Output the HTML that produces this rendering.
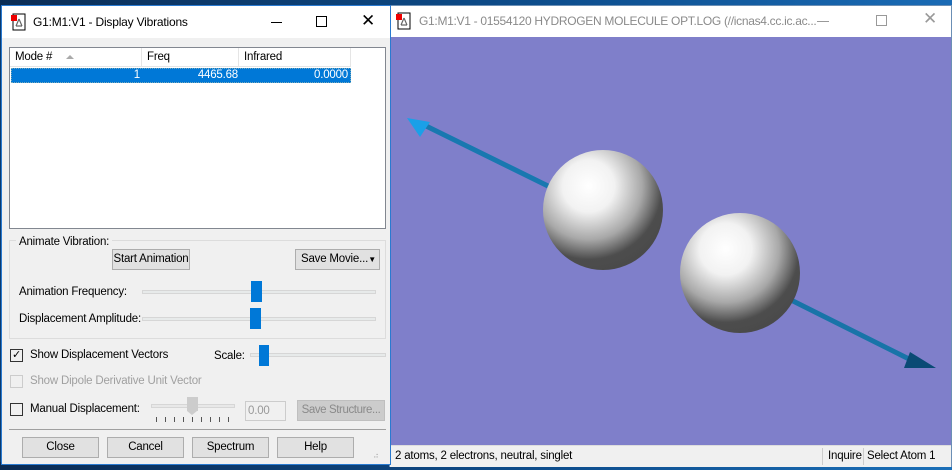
<!DOCTYPE html>
<html><head><style>
*{margin:0;padding:0;box-sizing:border-box}
body{width:952px;height:470px;overflow:hidden;background:#0a3a6e;position:relative;font-family:"Liberation Sans",sans-serif;font-size:11.5px;letter-spacing:-0.2px;color:#000}
.abs{position:absolute;white-space:nowrap}
.btn{position:absolute;white-space:nowrap;background:#e1e1e1;border:1px solid #adadad;text-align:center;line-height:19px;font-size:11.5px}
.track{position:absolute;height:4px;background:#e7eaea;border:1px solid #d6d6d6}
.thumb{position:absolute;width:11px;height:21px;background:#0078d7}
</style></head><body>
<div class="abs" style="left:0;top:0;width:952px;height:6px;background:linear-gradient(90deg,#0b2d55,#0d4f8f 60%,#1a6bb5)"></div>
<div class="abs" style="left:0;top:462px;width:952px;height:8px;background:linear-gradient(90deg,#0a2a52,#0e4e8e 60%,#1b6fb8)"></div>

<!-- right window -->
<div class="abs" style="left:389px;top:5px;width:563px;height:462px;background:#fff;border:1px solid #6b8fb5">
 <div class="abs" style="left:6px;top:6px;width:16px;height:18px">
  <svg width="16" height="18"><rect x="2" y="1" width="12" height="16" fill="#fff" stroke="#000"/><rect x="0" y="2" width="6" height="6" fill="#e00"/><path d="M8 6 L5 13 M8 6 L11 13 M5 13 H11" stroke="#666" stroke-width="1.2" fill="none"/></svg>
 </div>
 <div class="abs" style="left:29px;top:8px;font-size:12px;letter-spacing:-0.3px;color:#8a8a8a">G1:M1:V1 - 01554120 HYDROGEN MOLECULE OPT.LOG (//icnas4.cc.ic.ac...</div>
 <div class="abs" style="left:427px;top:15px;width:12px;height:1px;background:#999"></div>
 <div class="abs" style="left:486px;top:9px;width:11px;height:11px;border:1px solid #999"></div>
 <div class="abs" style="left:533px;top:3px;font-size:17px;color:#999">✕</div>
 <div class="abs" style="left:0;top:31px;width:561px;height:408px;background:#7f7fca;overflow:hidden">
  <svg width="561" height="408" style="position:absolute;left:0;top:0">
   <defs>
    <radialGradient id="s" cx="0.38" cy="0.3" r="0.72">
     <stop offset="0" stop-color="#fff"/><stop offset="0.3" stop-color="#f2f2f2"/><stop offset="0.62" stop-color="#a8a8a8"/><stop offset="0.85" stop-color="#4d4d4d"/><stop offset="1" stop-color="#4a4a4a"/>
    </radialGradient>
   </defs>
   <line x1="160" y1="150" x2="30" y2="86" stroke="#1878b0" stroke-width="5"/>
   <polygon points="17,81 40,85 30,100" fill="#1aa0e8"/>
   <line x1="395" y1="260" x2="525" y2="325" stroke="#1874a8" stroke-width="5"/>
   <polygon points="546,331 520,315 514,331" fill="#0a4a75"/>
   <circle cx="213" cy="173" r="60" fill="url(#s)"/>
   <circle cx="350" cy="236" r="60" fill="url(#s)"/>
  </svg>
 </div>
 <div class="abs" style="left:0;top:439px;width:561px;height:22px;background:#f0f0f0;border-top:1px solid #ddd">
  <div class="abs" style="left:5px;top:4px">2 atoms, 2 electrons, neutral, singlet</div>
  <div class="abs" style="left:432px;top:2px;width:1px;height:17px;background:#ccc"></div>
  <div class="abs" style="left:438px;top:4px">Inquire</div>
  <div class="abs" style="left:473px;top:2px;width:1px;height:17px;background:#ccc"></div>
  <div class="abs" style="left:477px;top:4px">Select Atom 1</div>
 </div>
</div>

<!-- left window -->
<div class="abs" style="left:1px;top:5px;width:390px;height:460px;background:#f0f0f0;border:1px solid #2a7ad0">
 <div class="abs" style="left:0;top:0;width:388px;height:32px;background:#fff"></div>
 <div class="abs" style="left:9px;top:7px;width:16px;height:18px">
  <svg width="16" height="18"><rect x="2" y="1" width="12" height="16" fill="#fff" stroke="#000"/><rect x="0" y="2" width="6" height="6" fill="#e00"/><path d="M8 6 L5 13 M8 6 L11 13 M5 13 H11" stroke="#666" stroke-width="1.2" fill="none"/></svg>
 </div>
 <div class="abs" style="left:31px;top:9px;font-size:12px">G1:M1:V1 - Display Vibrations</div>
 <div class="abs" style="left:269px;top:16px;width:11px;height:1px;background:#000"></div>
 <div class="abs" style="left:314px;top:10px;width:11px;height:11px;border:1px solid #000"></div>
 <div class="abs" style="left:359px;top:5px;font-size:17px">✕</div>

 <div class="abs" style="left:7px;top:41px;width:377px;height:182px;background:#fff;border:1px solid #828790">
  <div class="abs" style="left:0;top:0;width:340px;height:19px;border-bottom:1px solid #e5e5e5"></div>
  <div class="abs" style="left:131px;top:0;width:1px;height:19px;background:#e5e5e5"></div>
  <div class="abs" style="left:228px;top:0;width:1px;height:19px;background:#e5e5e5"></div>
  <div class="abs" style="left:340px;top:0;width:1px;height:19px;background:#e5e5e5"></div>
  <div class="abs" style="left:5px;top:3px">Mode #</div>
  <div class="abs" style="left:56px;top:7px;width:0;height:0;border-left:4px solid transparent;border-right:4px solid transparent;border-bottom:4px solid #aaa"></div>
  <div class="abs" style="left:137px;top:3px">Freq</div>
  <div class="abs" style="left:234px;top:3px">Infrared</div>
  <div class="abs" style="left:1px;top:20px;width:340px;height:15px;background:#0078d7;color:#fff;border:1px dotted #7ab">
   <span class="abs" style="right:210px;top:0">1</span>
   <span class="abs" style="right:112px;top:0">4465.68</span>
   <span class="abs" style="right:2px;top:0">0.0000</span>
  </div>
 </div>

 <div class="abs" style="left:7px;top:234px;width:377px;height:99px;border:1px solid #dcdcdc"></div>
 <div class="abs" style="left:14px;top:230px;background:#f0f0f0;padding:0 3px">Animate Vibration:</div>
 <div class="btn" style="left:110px;top:243px;width:78px;height:21px">Start Animation</div>
 <div class="btn" style="left:293px;top:243px;width:85px;height:21px;text-align:left;padding-left:5px">Save Movie...<span style="position:absolute;right:3px;top:0;font-size:8px">▼</span></div>
 <div class="abs" style="left:17px;top:280px">Animation Frequency:</div>
 <div class="track" style="left:140px;top:284px;width:234px"></div>
 <div class="thumb" style="left:249px;top:275px"></div>
 <div class="abs" style="left:17px;top:307px">Displacement Amplitude:</div>
 <div class="track" style="left:140px;top:311px;width:234px"></div>
 <div class="thumb" style="left:248px;top:302px"></div>

 <div class="abs" style="left:8px;top:343px;width:13px;height:13px;border:1px solid #333;font-size:11px;line-height:11px;text-align:center">✓</div>
 <div class="abs" style="left:28px;top:343px">Show Displacement Vectors</div>
 <div class="abs" style="left:212px;top:344px">Scale:</div>
 <div class="track" style="left:248px;top:347px;width:136px"></div>
 <div class="thumb" style="left:257px;top:339px;width:10px"></div>

 <div class="abs" style="left:8px;top:369px;width:13px;height:13px;border:1px solid #ccc"></div>
 <div class="abs" style="left:28px;top:369px;color:#a0a0a0">Show Dipole Derivative Unit Vector</div>

 <div class="abs" style="left:8px;top:397px;width:13px;height:13px;border:1px solid #333"></div>
 <div class="abs" style="left:28px;top:397px">Manual Displacement:</div>
 <div class="track" style="left:149px;top:398px;width:84px;background:#e8e8e8"></div>
 <div class="abs" style="left:185px;top:391px;width:11px;height:14px;background:#ccc"></div>
 <div class="abs" style="left:185px;top:405px;width:0;height:0;border-left:5.5px solid transparent;border-right:5.5px solid transparent;border-top:4px solid #ccc"></div>
 <div class="abs" style="left:154px;top:411px;width:80px;height:5px;background:repeating-linear-gradient(90deg,#555 0 1px,transparent 1px 9px)"></div>
 <div class="abs" style="left:243px;top:395px;width:41px;height:20px;border:1px solid #ccc;color:#999;padding:3px 2px;background:#f0f0f0">0.00</div>
 <div class="btn" style="left:295px;top:394px;width:88px;height:21px;background:#ccc;border-color:#bfbfbf;color:#8a8a8a;letter-spacing:-0.4px">Save Structure...</div>

 <div class="abs" style="left:7px;top:423px;width:377px;height:1px;background:#a0a0a0"></div>
 <div class="btn" style="left:20px;top:431px;width:77px;height:21px">Close</div>
 <div class="btn" style="left:105px;top:431px;width:77px;height:21px">Cancel</div>
 <div class="btn" style="left:190px;top:431px;width:77px;height:21px">Spectrum</div>
 <div class="btn" style="left:275px;top:431px;width:77px;height:21px">Help</div>
 <div class="abs" style="left:371px;top:445px;color:#aaa;font-size:8px">⠴</div>
</div>
</body></html>
